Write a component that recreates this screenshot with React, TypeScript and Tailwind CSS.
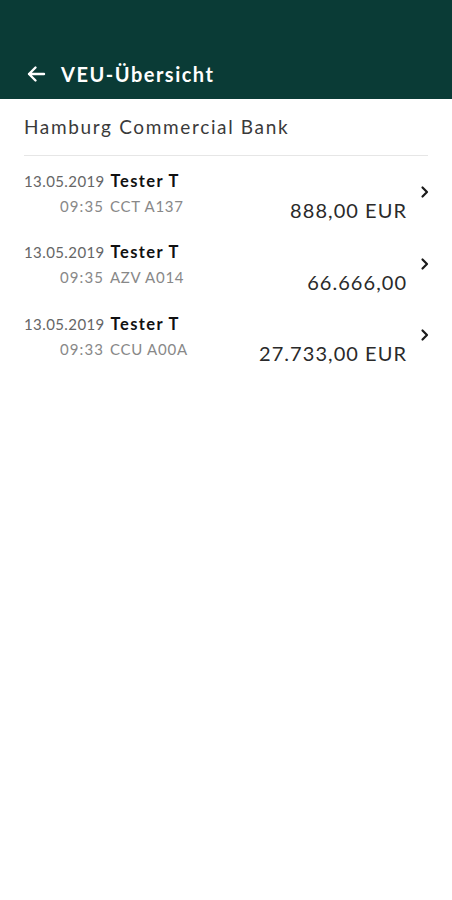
import React from 'react'

const rows = [
  { date: '13.05.2019', time: '09:35', name: 'Tester T', code: 'CCT A137', amount: '888,00 EUR' },
  { date: '13.05.2019', time: '09:35', name: 'Tester T', code: 'AZV A014', amount: '66.666,00' },
  { date: '13.05.2019', time: '09:33', name: 'Tester T', code: 'CCU A00A', amount: '27.733,00 EUR' },
]

const Chevron = () => (
  <svg width="10" height="14" viewBox="0 0 10 14" fill="none">
    <path d="M2.5 2.5 L7 7 L2.5 11.5" stroke="#1a1a1a" strokeWidth="2.2" strokeLinecap="round" strokeLinejoin="round" />
  </svg>
)

const App = () => {
  return (
    <div className="min-h-[900px] w-[452px] bg-white" style={{ fontFamily: 'Lato, "Noto Sans", sans-serif' }}>
      <header className="h-[99px] bg-[#0a3b36] flex items-end pb-[13px] px-[26px]">
        <div className="flex items-center gap-[15px] h-[24px]">
          <svg width="20" height="18" viewBox="0 0 20 18" fill="none">
            <path d="M18 9 H3 M9.5 2.5 L3 9 L9.5 15.5" stroke="white" strokeWidth="2.4" strokeLinecap="round" strokeLinejoin="round" />
          </svg>
          <span className="text-white font-bold text-[20px] leading-[24px] tracking-[1.5px]">VEU-Übersicht</span>
        </div>
      </header>

      <div className="px-[24px]">
        <div className="h-[57px] flex items-center border-b border-[#e6e6e6] pt-[1px]">
          <span className="text-[19px] text-[#3a3a3a] tracking-[1.65px]">Hamburg Commercial Bank</span>
        </div>

        <div className="pt-[13px]">
          {rows.map((r, i) => (
            <div key={i} className="h-[71.5px] flex">
              <div className="flex flex-col">
                <div className="flex items-center h-[24px] gap-[7px]">
                  <span className="w-[80px] text-right text-[15px] text-[#666] tracking-[0.4px] -mr-[0.4px]">{r.date}</span>
                  <span className="text-[16.5px] font-bold text-[#111] tracking-[1.4px]">{r.name}</span>
                </div>
                <div className="flex items-center h-[24px] gap-[7px] mt-[1px]">
                  <span className="w-[80px] text-right text-[15px] text-[#888] tracking-[1.1px] -mr-[1.1px]">{r.time}</span>
                  <span className="text-[15px] text-[#888] tracking-[0.75px]">{r.code}</span>
                </div>
              </div>
              <div className="flex-1 flex justify-end items-start">
                <span className="mt-[29px] text-[20px] text-[#2a2a2a] leading-[24px] tracking-[1.05px] -mr-[1.05px]">{r.amount}</span>
                <span className="ml-[13px] mr-[-3px] mt-[16px] w-[12px] flex justify-center">
                  <Chevron />
                </span>
              </div>
            </div>
          ))}
        </div>
      </div>
    </div>
  )
}

export default App
